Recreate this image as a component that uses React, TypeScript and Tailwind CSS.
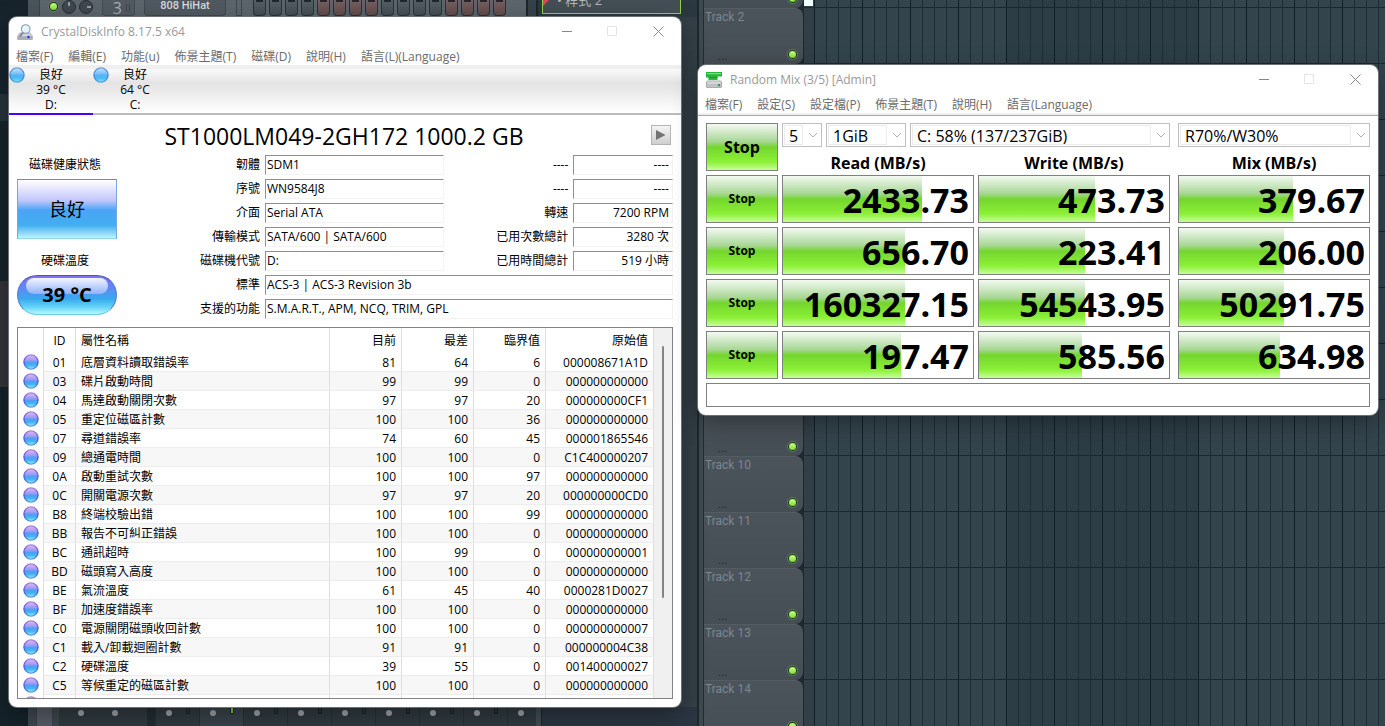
import { useId } from "react";
import type { ReactNode } from "react";

/* ---------- data ---------- */

type SmartRow = [id: string, name: string, current: number, worst: number, threshold: number, raw: string];

const smartRows: SmartRow[] = [
  ["01", "底層資料讀取錯誤率", 81, 64, 6, "000008671A1D"],
  ["03", "碟片啟動時間", 99, 99, 0, "000000000000"],
  ["04", "馬達啟動關閉次數", 97, 97, 20, "000000000CF1"],
  ["05", "重定位磁區計數", 100, 100, 36, "000000000000"],
  ["07", "尋道錯誤率", 74, 60, 45, "000001865546"],
  ["09", "總通電時間", 100, 100, 0, "C1C400000207"],
  ["0A", "啟動重試次數", 100, 100, 97, "000000000000"],
  ["0C", "開關電源次數", 97, 97, 20, "000000000CD0"],
  ["B8", "終端校驗出錯", 100, 100, 99, "000000000000"],
  ["BB", "報告不可糾正錯誤", 100, 100, 0, "000000000000"],
  ["BC", "通訊超時", 100, 99, 0, "000000000001"],
  ["BD", "磁頭寫入高度", 100, 100, 0, "000000000000"],
  ["BE", "氣流溫度", 61, 45, 40, "0000281D0027"],
  ["BF", "加速度錯誤率", 100, 100, 0, "000000000000"],
  ["C0", "電源關閉磁頭收回計數", 100, 100, 0, "000000000007"],
  ["C1", "載入/卸載迴圈計數", 91, 91, 0, "000000004C38"],
  ["C2", "硬碟溫度", 39, 55, 0, "001400000027"],
  ["C5", "等候重定的磁區計數", 100, 100, 0, "000000000000"],
];

const benchRows: { value: string; fill: number }[][] = [
  [{ value: "2433.73", fill: 73 }, { value: "473.73", fill: 61 }, { value: "379.67", fill: 60 }],
  [{ value: "656.70", fill: 64 }, { value: "223.41", fill: 56 }, { value: "206.00", fill: 55 }],
  [{ value: "160327.15", fill: 64 }, { value: "54543.95", fill: 56 }, { value: "50291.75", fill: 55 }],
  [{ value: "197.47", fill: 62 }, { value: "585.56", fill: 54 }, { value: "634.98", fill: 53 }],
];

const tracks: { label?: string; dots?: boolean }[] = [
  {},
  { label: "Track 2", dots: true },
  {}, {}, {}, {}, {}, {},
  { dots: true },
  { label: "Track 10", dots: true },
  { label: "Track 11", dots: true },
  { label: "Track 12", dots: true },
  { label: "Track 13", dots: true },
  { label: "Track 14" },
];

const steps = Array.from({ length: 16 }, (_, i) => i);
const mixerStrips = Array.from({ length: 9 }, (_, i) => i);

/* ---------- shared pieces ---------- */

function Orb({ pale = false }: { pale?: boolean }) {
  const id = useId();
  return (
    <svg viewBox="0 0 16 16" className="size-4 shrink-0" aria-hidden="true">
      <defs>
        <linearGradient id={id} x1="0" y1="0" x2="0" y2="1">
          <stop offset="0" stopColor={pale ? "#c4e2ff" : "#dcbcf0"} />
          <stop offset="0.35" stopColor={pale ? "#86c6fb" : "#a79cf6"} />
          <stop offset="0.55" stopColor={pale ? "#4fb2f5" : "#4a9ff4"} />
          <stop offset="0.75" stopColor={pale ? "#4fc0f7" : "#44b8f2"} />
          <stop offset="1" stopColor={pale ? "#8ce4ff" : "#98f2ff"} />
        </linearGradient>
        <linearGradient id={`${id}s`} x1="0" y1="0" x2="0" y2="1">
          <stop offset="0" stopColor={pale ? "#6f9fe0" : "#a884dc"} />
          <stop offset="0.5" stopColor={pale ? "#3f7fd0" : "#4a44d4"} />
          <stop offset="1" stopColor={pale ? "#4fa4dc" : "#5a9ce0"} />
        </linearGradient>
      </defs>
      <circle cx="8" cy="8" r="7.100" fill={`url(#${id})`} stroke={`url(#${id}s)`} strokeWidth="1.200" />
    </svg>
  );
}

function DiskInfoIcon() {
  return (
    <svg viewBox="0 0 16 16" className="size-4" aria-hidden="true">
      <path d="M3 9 .7 12v3.500h14.600V12L13 9z" fill="#d3d6db" stroke="#8b8f98" strokeWidth=".6" />
      <path d="M.7 12.200h14.600v3.300H.7z" fill="#a9adb6" />
      <path d="M6 8.500 3.200 12" stroke="#7b8796" strokeWidth="2" strokeLinecap="round" />
      <circle cx="8.700" cy="5" r="4.300" fill="#e3f3fd" stroke="#8a9aac" strokeWidth="1.100" />
      <path d="M6.300 4.600a2.700 2.700 0 0 1 3-2.300" stroke="#fff" strokeWidth="1.200" fill="none" />
      <circle cx="11.500" cy="13" r="1.300" fill="#2a36f0" />
    </svg>
  );
}

function DiskMarkIcon() {
  return (
    <svg viewBox="0 0 16 16" className="size-4" aria-hidden="true">
      <path d="M0 0h16v4.500h-4.500V8H2.500V5.500H0z" fill="#27b53a" />
      <path d="M1 1h14v1.200H1z" fill="#74e080" />
      <path d="M2.500 5.500h9" stroke="#1b8f2c" strokeWidth=".7" />
      <path d="M2.500 8h11L16 10.500H0z" fill="#e4e5e8" stroke="#9a9ca2" strokeWidth=".5" />
      <rect x=".3" y="10" width="15.400" height="5.600" rx="1" fill="#bfc1c7" stroke="#7b7d84" strokeWidth=".6" />
      <path d="M1 10.900h14" stroke="#f2f2f4" />
      <rect x="12" y="12" width="2" height="2.200" fill="#24a336" />
    </svg>
  );
}

function TitleBar({ icon, title }: { icon: ReactNode; title: string }) {
  return (
    <header className="flex h-[30px] items-center gap-2 pr-[14px] pl-2 text-xs text-[#999999]">
      {icon}
      <h1 className="flex-1 font-normal">{title}</h1>
      <div className="flex gap-[29px] pb-0.5">
        <button type="button" aria-label="最小化" className="grid h-7 w-4 place-items-center text-[#888888]">
          <svg viewBox="0 0 10 10" className="size-[10px]"><path d="M0 5.500h10" stroke="currentColor" /></svg>
        </button>
        <button type="button" aria-label="最大化" disabled className="grid h-7 w-4 place-items-center text-[#e4e4e4]">
          <svg viewBox="0 0 10 10" className="size-[10px]"><path d="M.5.5h9v9h-9z" stroke="currentColor" fill="none" /></svg>
        </button>
        <button type="button" aria-label="關閉" className="grid h-7 w-[18px] place-items-center text-[#888888]">
          <svg viewBox="0 0 11 11" className="size-[11px]"><path d="m.5.5 10 10m0-10-10 10" stroke="currentColor" /></svg>
        </button>
      </div>
    </header>
  );
}

function MenuBar({ items }: { items: string[] }) {
  return (
    <nav className="flex h-[18px] items-center gap-[15px] px-[7px] pt-0.5 text-xs text-[#6b6b6b]">
      {items.map((item) => (
        <button key={item} type="button" className="whitespace-nowrap">{item}</button>
      ))}
    </nav>
  );
}

/* ---------- disk information window ---------- */

function DriveTab({ temp, drive, active = false }: { temp: string; drive: string; active?: boolean }) {
  return (
    <button
      type="button"
      className={`relative -mb-0.5 flex w-21 items-start border-b-2 pt-0.5 text-xs leading-[15px] text-black ${active ? "border-[#4a00ff]" : "border-transparent"}`}
    >
      <Orb pale />
      <span className="flex-1 pr-4 text-center">
        良好<br />{temp}<br />{drive}
      </span>
    </button>
  );
}

function Field({ label, value, wide = false, end = false }: { label: string; value: string; wide?: boolean; end?: boolean }) {
  const id = useId();
  return (
    <>
      <label htmlFor={id} className="text-right whitespace-nowrap">{label}</label>
      <input
        id={id}
        readOnly
        value={value}
        className={`h-5 min-w-0 border border-t-[#8f8f94] border-r-[#f3f3f3] border-b-[#f3f3f3] border-l-[#8f8f94] px-px pb-0.5 outline-none ${wide ? "col-span-3" : ""} ${end ? "pr-[3px] text-right" : ""}`}
      />
    </>
  );
}

function SmartTable() {
  const head = "border-r border-[#dedede] font-normal";
  const cell = "border-r border-b border-r-[#dedede] border-b-[#ededed] pt-0.5";
  const orbCell = "border-r border-[#dedede] bg-white pt-px pl-[5px] align-top";
  return (
    <div className="mt-2 flex h-[372px] overflow-hidden border border-[#82828c]">
      <table className="min-w-0 flex-1 table-fixed border-separate border-spacing-0 self-start text-xs leading-4">
        <colgroup>
          <col className="w-[26px]" />
          <col className="w-8" />
          <col />
          <col className="w-18" />
          <col className="w-18" />
          <col className="w-18" />
          <col className="w-27" />
        </colgroup>
        <thead>
          <tr className="h-[25px]">
            <th className={head} />
            <th className={head}>ID</th>
            <th className={`${head} pl-[5px] text-left`}>屬性名稱</th>
            <th className={`${head} pr-[5px] text-right`}>目前</th>
            <th className={`${head} pr-[5px] text-right`}>最差</th>
            <th className={`${head} pr-[5px] text-right`}>臨界值</th>
            <th className={`${head} pr-[5px] text-right`}>原始值</th>
          </tr>
        </thead>
        <tbody>
          {smartRows.map(([id, name, current, worst, threshold, raw]) => (
            <tr key={id} className="h-[19px] even:bg-[#f7f7f7]">
              <td className={orbCell}><Orb /></td>
              <td className={`${cell} text-center`}>{id}</td>
              <td className={`${cell} pl-[5px] whitespace-nowrap`}>{name}</td>
              <td className={`${cell} pr-[5px] text-right`}>{current}</td>
              <td className={`${cell} pr-[5px] text-right`}>{worst}</td>
              <td className={`${cell} pr-[5px] text-right`}>{threshold}</td>
              <td className={`${cell} pr-[5px] text-right`}>{raw}</td>
            </tr>
          ))}
          <tr className="h-[19px]">
            <td className={orbCell}><Orb /></td>
            {[0, 1, 2, 3, 4, 5].map((n) => <td key={n} className={cell} />)}
          </tr>
        </tbody>
      </table>
      <div className="flex w-[18px] justify-center bg-[#f0f0f0] pt-[18px]">
        <span className="h-[252px] w-0.5 rounded-full bg-[#858585]" />
      </div>
    </div>
  );
}

function DiskInfoWindow() {
  return (
    <section className="mt-[17px] overflow-hidden rounded-lg bg-white text-xs text-black shadow-[0_0_0_1px_#6b7275,0_8px_24px_rgba(0,0,0,0.35)]">
      <TitleBar icon={<DiskInfoIcon />} title="CrystalDiskInfo 8.17.5 x64" />
      <MenuBar items={["檔案(F)", "編輯(E)", "功能(u)", "佈景主題(T)", "磁碟(D)", "說明(H)", "語言(L)(Language)"]} />
      <div className="flex h-[50px] border-b-2 border-[#bcbcbc] bg-[linear-gradient(#efefef_0_4px,#fafafa_4px,#e4e4e4_18px,#e8e8e8_24px,#ffffff_48px)]">
        <DriveTab temp="39 °C" drive="D:" active />
        <DriveTab temp="64 °C" drive="C:" />
      </div>
      <div className="px-2 pb-2">
        <div className="flex h-10 items-center pl-5">
          <h2 className="flex-1 pt-0.5 text-center text-[23px]">ST1000LM049-2GH172 1000.2 GB</h2>
          <button type="button" aria-label="下一個磁碟" className="mr-0.5 grid size-5 place-items-center border border-[#b4b4b4] bg-linear-to-b from-[#f4f4f4] to-[#cfcfcf]">
            <svg viewBox="0 0 10 10" className="size-[10px]"><path d="M0 0v10l9.500-5z" fill="#737373" /></svg>
          </button>
        </div>
        <div className="flex">
          <div className="flex w-25 flex-col text-center">
            <span className="h-5 pr-1 leading-5">磁碟健康狀態</span>
            <button
              type="button"
              className="mt-1 h-15 border border-t-[#8080c8] border-r-[#79a6dc] border-b-[#8fd8ea] border-l-[#79a6dc] bg-[linear-gradient(#ffffff,#c3c7fb_35%,#4ba4f6_52%,#42aef0_78%,#bdf4fb)] text-lg"
            >
              良好
            </button>
            <span className="mt-3 h-5 pr-1 leading-5">硬碟溫度</span>
            <button
              type="button"
              className="relative mt-1 h-10 overflow-hidden rounded-full border border-t-[#5353b4] border-r-[#5577dd] border-b-[#6ccde6] border-l-[#5577dd] bg-[linear-gradient(#7c74f3,#5b8cf3_35%,#38aaee_60%,#5fd0f6_80%,#b4f8ff)] text-xl font-bold"
            >
              <span className="absolute inset-x-2 top-0.5 h-4 rounded-full bg-linear-to-b from-[#f4f5ff] to-[#8fb2f8]" />
              <span className="relative">39 °C</span>
            </button>
          </div>
          <div className="grid flex-1 grid-cols-[143px_180fr_119px_100fr] items-center gap-x-[5px] gap-y-1">
            <Field label="韌體" value="SDM1" />
            <Field label="----" value="----" end />
            <Field label="序號" value="WN9584J8" />
            <Field label="----" value="----" end />
            <Field label="介面" value="Serial ATA" />
            <Field label="轉速" value="7200 RPM" end />
            <Field label="傳輸模式" value="SATA/600 | SATA/600" />
            <Field label="已用次數總計" value="3280 次" end />
            <Field label="磁碟機代號" value="D:" />
            <Field label="已用時間總計" value="519 小時" end />
            <Field label="標準" value="ACS-3 | ACS-3 Revision 3b" wide />
            <Field label="支援的功能" value="S.M.A.R.T., APM, NCQ, TRIM, GPL" wide />
          </div>
        </div>
        <SmartTable />
      </div>
    </section>
  );
}

/* ---------- benchmark window ---------- */

function Combo({ label, value, className }: { label: string; value: string; className: string }) {
  return (
    <div className={`relative h-6 border border-[#bfbfbf] bg-white ${className}`}>
      <select
        aria-label={label}
        defaultValue={value}
        className="block h-[22px] w-full appearance-none pl-1.5 text-base text-black outline-none"
      >
        <option>{value}</option>
      </select>
      <span className="pointer-events-none absolute inset-y-px right-[18px] left-px border border-[#ececec]" />
      <svg viewBox="0 0 10 6" className="pointer-events-none absolute top-2 right-[3px] h-1.5 w-[10px]" aria-hidden="true">
        <path d="m1 1 4 4 4-4" stroke="#b0b0b0" fill="none" />
      </svg>
    </div>
  );
}

const green = "bg-[linear-gradient(#f4faf2,#a8d796_38%,#74d62e_50%,#8cf036_82%,#c4ff98)]";

function StopButton({ className }: { className: string }) {
  return (
    <button type="button" className={`border border-[#808080] font-bold ${green} ${className}`}>Stop</button>
  );
}

function BenchmarkWindow() {
  return (
    <section className="mt-[65px] self-start overflow-hidden rounded-lg bg-white text-black shadow-[0_0_0_1px_#6b7275,0_8px_24px_rgba(0,0,0,0.35)]">
      <TitleBar icon={<DiskMarkIcon />} title="Random Mix (3/5) [Admin]" />
      <MenuBar items={["檔案(F)", "設定(S)", "設定檔(P)", "佈景主題(T)", "說明(H)", "語言(Language)"]} />
      <div className="h-[3px] border-b border-[#a8a8a8] bg-[#f0f0f0]" />
      <div className="grid grid-cols-[72px_192fr_192fr_196fr] gap-1 px-2 pt-[7px] pb-2">
        <StopButton className="row-span-2 text-base" />
        <div className="col-span-2 flex gap-1">
          <Combo label="測試次數" value="5" className="w-10" />
          <Combo label="測試大小" value="1GiB" className="w-20" />
          <Combo label="磁碟" value="C: 58% (137/237GiB)" className="flex-1" />
        </div>
        <Combo label="混合比例" value="R70%/W30%" className="ml-1" />
        <h2 className="pt-1 text-center text-base leading-4 font-bold">Read (MB/s)</h2>
        <h2 className="pt-1 text-center text-base leading-4 font-bold">Write (MB/s)</h2>
        <h2 className="ml-1 pt-1 text-center text-base leading-4 font-bold">Mix (MB/s)</h2>
        {benchRows.map((row, r) => [
          <StopButton key={`stop-${r}`} className="h-12 text-xs" />,
          ...row.map(({ value, fill }, c) => (
            <div key={`${r}-${c}`} className={`relative h-12 border border-[#808080] bg-white ${c === 2 ? "ml-1" : ""}`}>
              <div className={`h-full ${green}`} style={{ width: `${fill}%` }} />
              <output className="absolute inset-0 pr-1 text-right text-[34px] leading-[48px] font-bold">{value}</output>
            </div>
          )),
        ])}
        <div className="col-span-4 h-6 border border-[#808080]" />
      </div>
    </section>
  );
}

/* ---------- music workstation behind the windows ---------- */

function Led() {
  return (
    <span className="grid size-[11px] place-items-center rounded-full border border-[#74807f] bg-[#14340c]">
      <span className="size-[7px] rounded-full bg-linear-to-b from-[#c8ff7c] to-[#7fe02c]" />
    </span>
  );
}

function Knob({ angle }: { angle: string }) {
  return (
    <svg viewBox="0 0 14 14" className="size-[14px]" aria-hidden="true">
      <circle cx="7" cy="7" r="6.500" fill="#3f484e" stroke="#272f34" />
      <path d={angle} stroke="#c4cbcf" strokeWidth="1.300" />
    </svg>
  );
}

function ChannelRack() {
  return (
    <div className="ml-7 flex h-[17px] overflow-hidden bg-[#5b656b]">
      <div className="w-3 border-r border-[#39434a] bg-[#4a545b]" />
      <div className="flex w-[62px] items-start gap-[3px] pl-2">
        <span className="pt-px"><Led /></span>
        <Knob angle="M7 2v4" />
        <Knob angle="M8 7h4" />
      </div>
      <div className="flex h-4 w-[33px] items-center justify-end gap-1 rounded-b border border-t-0 border-[#434d54] bg-[#515b61] pr-1 text-[#a5afb4]">
        <span className="text-base leading-none">3</span>
        <span className="h-2 w-1 border-x border-[#3c464c]" />
      </div>
      <div className="ml-[9px] h-4 w-[82px] rounded-b border border-t-0 border-[#3f494f] bg-[#4f595f] text-center font-[Roboto] text-[11px] leading-[11px] font-medium text-[#d5dadd]">
        808 HiHat
      </div>
      <div className="ml-[10px] h-4 w-1.5 border border-t-0 border-[#3d474d]" />
      <div className="ml-[11px] flex gap-[3px]">
        {steps.map((n) => (
          <span
            key={n}
            className={`flex h-4 w-[13px] justify-center rounded-b border border-t-0 border-[#2a3237] ${Math.floor(n / 4) % 2 === 1 ? "bg-linear-to-b from-[#7a5f60] to-[#5f4b4d]" : "bg-linear-to-b from-[#566067] to-[#434d53]"}`}
          >
            <span className="h-0.5 w-[7px] bg-[#20282c]" />
          </span>
        ))}
      </div>
      <div className="ml-5 w-3 border-x-2 border-[#1c262c] bg-[#36424a]" />
      <div className="flex-1 bg-[#2c383f] pr-4 pl-1">
        <div className="flex h-3.5 items-start gap-1.5 overflow-hidden border border-t-0 border-[#8fd048] bg-[#434e55] text-[13px] leading-none text-[#b3babd]">
          <svg viewBox="0 0 8 8" className="-mt-0.5 h-2 w-2" aria-hidden="true"><path d="M0 0h8L0 8z" fill="#e8405c" /></svg>
          <span className="-mt-1.5">• 样式 2</span>
        </div>
      </div>
    </div>
  );
}

function Mixer() {
  return (
    <div className="ml-7 flex h-[19px] bg-[#2b3642]">
      <div className="w-2 bg-[#3e474e]" />
      <div className="w-[17px] border-x border-[#3a4148] bg-[#555b66]" />
      <div className="w-1.5 bg-[#3e474e]" />
      <div className="flex w-24 gap-7 border-r-8 border-[#222c32] bg-[#303a40] pl-[19px]">
        <span className="mt-[3px] size-1.5 rounded-full bg-[#9ba2a5]" />
        <span className="mt-[3px] size-1.5 rounded-full bg-[#9ba2a5]" />
      </div>
      <div className="flex w-[381px] overflow-hidden">
        {mixerStrips.map((n) => (
          <div key={n} className={`flex w-11 shrink-0 items-start justify-between border-l border-[#283137] pr-[9px] pl-[10px] ${n === 1 ? "bg-[#38434a]" : "bg-[#303a40]"}`}>
            <span className="mt-[3px] size-1.5 rounded-full bg-[#9ba2a5]" />
            <span className={`h-[7px] w-1 border border-t-0 border-[#1d262b] ${n === 1 ? "bg-[#86c83c]" : "bg-[#2a3339]"}`} />
          </div>
        ))}
      </div>
      <div className="w-1.5 border-r border-[#1b2429] bg-[#414c53]" />
    </div>
  );
}

function Playlist() {
  return (
    <div className="flex min-w-0 overflow-hidden border-l-2 border-[#1d282e] bg-[#3d484f]">
      <div className="ml-1 w-[100px] border-l border-[#222c32] bg-[#1d2930]">
        <div className="-mt-12">
          {tracks.map(({ label, dots }, n) => (
            <div key={n} className="relative h-14 rounded-r-lg border-t border-[#535c62] bg-linear-to-b from-[#4b545b] to-[#454e54] pl-px font-[Roboto] text-xs text-[#7c868b]">
              {label}
              <span className="absolute right-[5px] bottom-1"><Led /></span>
              {dots && <span className="absolute bottom-0.5 left-3.5 leading-none text-[#242d32]">...</span>}
            </div>
          ))}
        </div>
      </div>
      <div className="w-[11px] border-l border-[#1b272e] bg-[#323f46] bg-[repeating-linear-gradient(transparent_0_7px,#1e2c33_7px_8px,transparent_8px_56px)]">
        <div className="h-1.5 w-[9px] bg-[#f0ffff]" />
      </div>
      <div className="flex-1 bg-[repeating-linear-gradient(transparent_0_7px,#192730_7px_8px,transparent_8px_56px),repeating-linear-gradient(90deg,#10202a_0_1px,transparent_1px_48px),repeating-linear-gradient(90deg,#1e2e37_0_1px,transparent_1px_12px),repeating-linear-gradient(90deg,#34444d_0_192px,#2d3d46_192px_384px)]" />
    </div>
  );
}

function Workstation() {
  return (
    <div className="absolute inset-0 grid grid-cols-[697fr_688fr]" aria-hidden="true">
      <div className="flex flex-col justify-between bg-[linear-gradient(#17242c_0_94px,#26343b_94px_121px,#17242c_121px_281px,#343439_281px_387px,#15222a_387px)]">
        <ChannelRack />
        <div className="ml-[540px] flex-1 bg-[#333f46]" />
        <Mixer />
      </div>
      <Playlist />
    </div>
  );
}

export default function App() {
  return (
    <main className="relative h-screen min-w-[1200px] overflow-hidden bg-[#17242c] font-['Open_Sans','Noto_Sans_CJK_TC',sans-serif]">
      <Workstation />
      <div className="relative grid grid-cols-[672fr_680fr] items-start gap-[17px] pr-[7px] pl-[9px]">
        <DiskInfoWindow />
        <BenchmarkWindow />
      </div>
    </main>
  );
}
